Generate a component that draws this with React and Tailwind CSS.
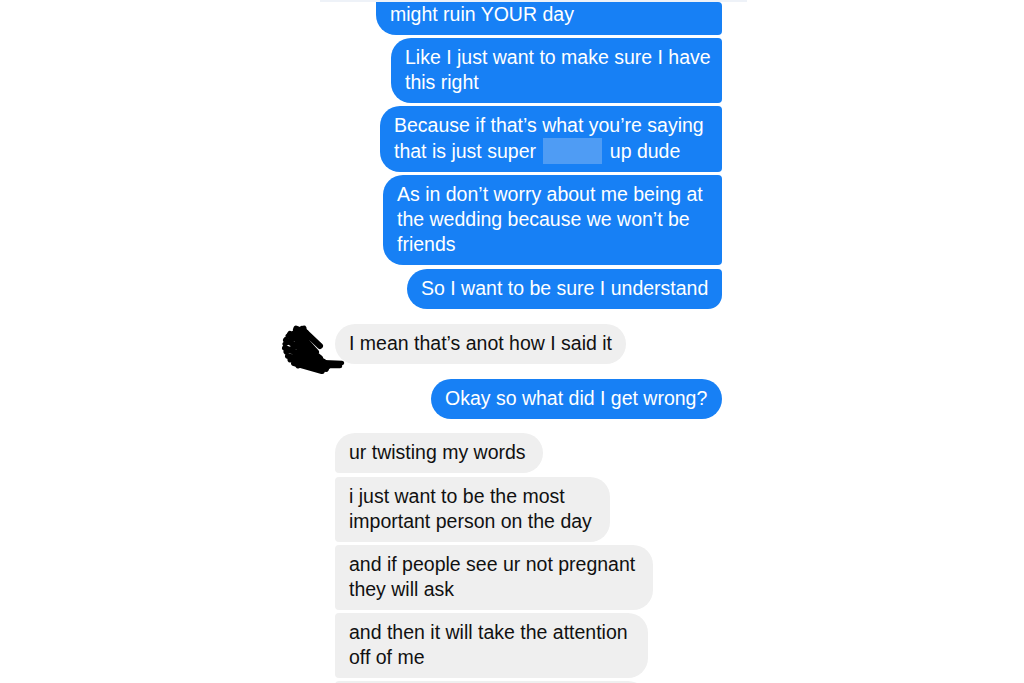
import React from 'react'

// Chat screenshot: outgoing blue bubbles on the right, incoming grey on the left.

const font = { fontFamily: '"Liberation Sans", Arial, sans-serif' }

function Blue({ lines, w, className = '' }) {
  return (
    <div
      className={`self-end bg-[#1780f5] text-white text-[19.5px] leading-[25px] py-[7.5px] px-[14px] whitespace-nowrap ${w} ${className}`}
    >
      {lines.map((l, i) => (
        <div key={i}>{l}</div>
      ))}
    </div>
  )
}

function Gray({ lines, w, className = '' }) {
  return (
    <div
      className={`self-start bg-[#efefef] text-[#111] text-[19.5px] leading-[25px] py-[7.5px] px-[14px] whitespace-nowrap ${w} ${className}`}
    >
      {lines.map((l, i) => (
        <div key={i}>{l}</div>
      ))}
    </div>
  )
}

function Scribble() {
  return (
    <svg width="62" height="48" viewBox="0 0 62 48" className="overflow-visible">
      <g stroke="#000" strokeLinecap="round" strokeLinejoin="round" fill="none">
        <path strokeWidth="6" d="M14 4 L34 26 M8 8 L38 32 M4 14 L42 36 M3 22 L46 40 M6 30 L44 43 M12 37 L40 45 M20 3 L38 20" />
        <path strokeWidth="5" d="M6 10 L22 2 M3 18 L18 8 M4 26 L24 14 M8 34 L30 22 M16 40 L34 30 M24 6 L14 2" />
        <path strokeWidth="4.5" d="M36 36 L60 37 M34 40 L58 40" />
      </g>
    </svg>
  )
}

export default function App() {
  return (
    <div className="w-[1024px] h-[683px] overflow-hidden bg-white" style={font}>
      <div className="ml-[282px] w-[440px] flex flex-col">
        <div className="ml-[38px] w-[427px] h-[2px] bg-[#eef2f8]" />
        <Blue
          lines={['might ruin YOUR day']}
          w="w-[346px] !pt-0 rounded-bl-[20px] rounded-tl-none rounded-r-[4px]"
        />
        <Blue
          lines={['Like I just want to make sure I have', 'this right']}
          w="w-[331px] mt-[3px] rounded-l-[20px] rounded-r-[4px]"
        />
        <Blue
          lines={[
            'Because if that\u2019s what you\u2019re saying',
            <span key="c">
              that is just super <span className="inline-block align-[-6px] w-[59px] h-[26px] bg-[#4f9cf4] mx-[2px]" /> up dude
            </span>,
          ]}
          w="w-[342px] mt-[3px] rounded-l-[20px] rounded-r-[4px]"
        />
        <Blue
          lines={['As in don\u2019t worry about me being at', 'the wedding because we won\u2019t be', 'friends']}
          w="w-[339px] mt-[3px] rounded-l-[20px] rounded-r-[4px]"
        />
        <Blue
          lines={['So I want to be sure I understand']}
          w="w-[315px] mt-[4px] rounded-l-[20px] rounded-tr-[4px] rounded-br-[14px]"
        />

        <div className="flex items-start mt-[15px]">
          <div className="w-[53px] h-[40px] shrink-0 pt-[2px]">
            <Scribble />
          </div>
          <Gray lines={['I mean that\u2019s anot how I said it']} w="w-[291px] rounded-[20px]" />
        </div>

        <Blue lines={['Okay so what did I get wrong?']} w="w-[291px] mt-[15px] rounded-[21px]" />

        <div className="flex flex-col pl-[53px] mt-[14px]">
          <Gray lines={['ur twisting my words']} w="w-[208px] rounded-r-[20px] rounded-tl-[20px] rounded-bl-[4px]" />
          <Gray
            lines={['i just want to be the most', 'important person on the day']}
            w="w-[275px] mt-[4px] rounded-r-[20px] rounded-l-[4px]"
          />
          <Gray
            lines={['and if people see ur not pregnant', 'they will ask']}
            w="w-[318px] mt-[3px] rounded-r-[20px] rounded-l-[4px]"
          />
          <Gray
            lines={['and then it will take the attention', 'off of me']}
            w="w-[313px] mt-[3px] rounded-r-[20px] rounded-l-[4px]"
          />
          <div className="w-[313px] h-[40px] mt-[3px] bg-[#efefef] rounded-r-[20px] rounded-l-[4px]" />
        </div>
      </div>
    </div>
  )
}
